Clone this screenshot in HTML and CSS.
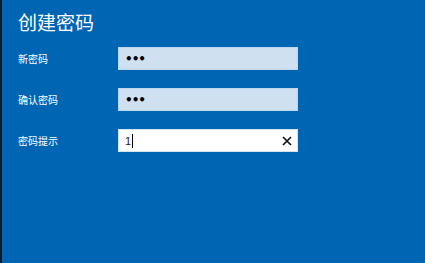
FILE: index.html
```html
<!DOCTYPE html>
<html lang="zh">
<head>
<meta charset="utf-8">
<link rel="stylesheet" href="styles.css">
</head>
<body>
<div class="page">
  <h1 class="title">创建密码</h1>
  <div class="form">
    <div class="row">
      <div class="label">新密码</div>
      <div class="field filled"><span class="dots">•••</span></div>
    </div>
    <div class="row">
      <div class="label">确认密码</div>
      <div class="field filled"><span class="dots">•••</span></div>
    </div>
    <div class="row">
      <div class="label">密码提示</div>
      <div class="field active">
        <span class="text">1</span><span class="caret"></span>
        <svg class="clear" width="10" height="10" viewBox="0 0 10 10"><path d="M1 1L9 9M9 1L1 9" stroke="#111" stroke-width="1.7" fill="none"/></svg>
      </div>
    </div>
  </div>
</div>
</body>
</html>
```
FILE: styles.css
```css
html, body {
  margin: 0;
  padding: 0;
  width: 425px;
  height: 263px;
  overflow: hidden;
}
body {
  font-family: "Noto Sans CJK SC", "Liberation Sans", sans-serif;
}
.page {
  box-sizing: border-box;
  width: 425px;
  height: 263px;
  background: #0065b3;
  border-left: 2px solid #0b1a2e;
  padding: 9px 0 0 16px;
  color: #fff;
}
.title {
  margin: 0;
  font-size: 19px;
  font-weight: normal;
  line-height: 26px;
}
.form {
  margin-top: 12px;
  display: flex;
  flex-direction: column;
  gap: 18px;
}
.row {
  display: flex;
  align-items: center;
  height: 23px;
}
.label {
  width: 100px;
  font-size: 10px;
  line-height: 14px;
}
.field {
  box-sizing: border-box;
  width: 180px;
  height: 23px;
  display: flex;
  align-items: center;
  padding: 0 5px 0 6px;
  color: #000;
}
.filled {
  background: #cfe1f1;
  border: 1px solid #bcd6ec;
}
.active {
  background: #fff;
  border: 1px solid #d6e4f0;
}
.dots {
  font-family: "DejaVu Sans", sans-serif;
  font-size: 12px;
  font-weight: bold;
  letter-spacing: -1px;
  line-height: 12px;
}
.text {
  font-family: "Liberation Sans", sans-serif;
  font-size: 11px;
  color: #222;
}
.caret {
  display: inline-block;
  width: 1px;
  height: 14px;
  background: #000;
  margin-left: 1px;
}
.clear {
  margin-left: auto;
}
```
